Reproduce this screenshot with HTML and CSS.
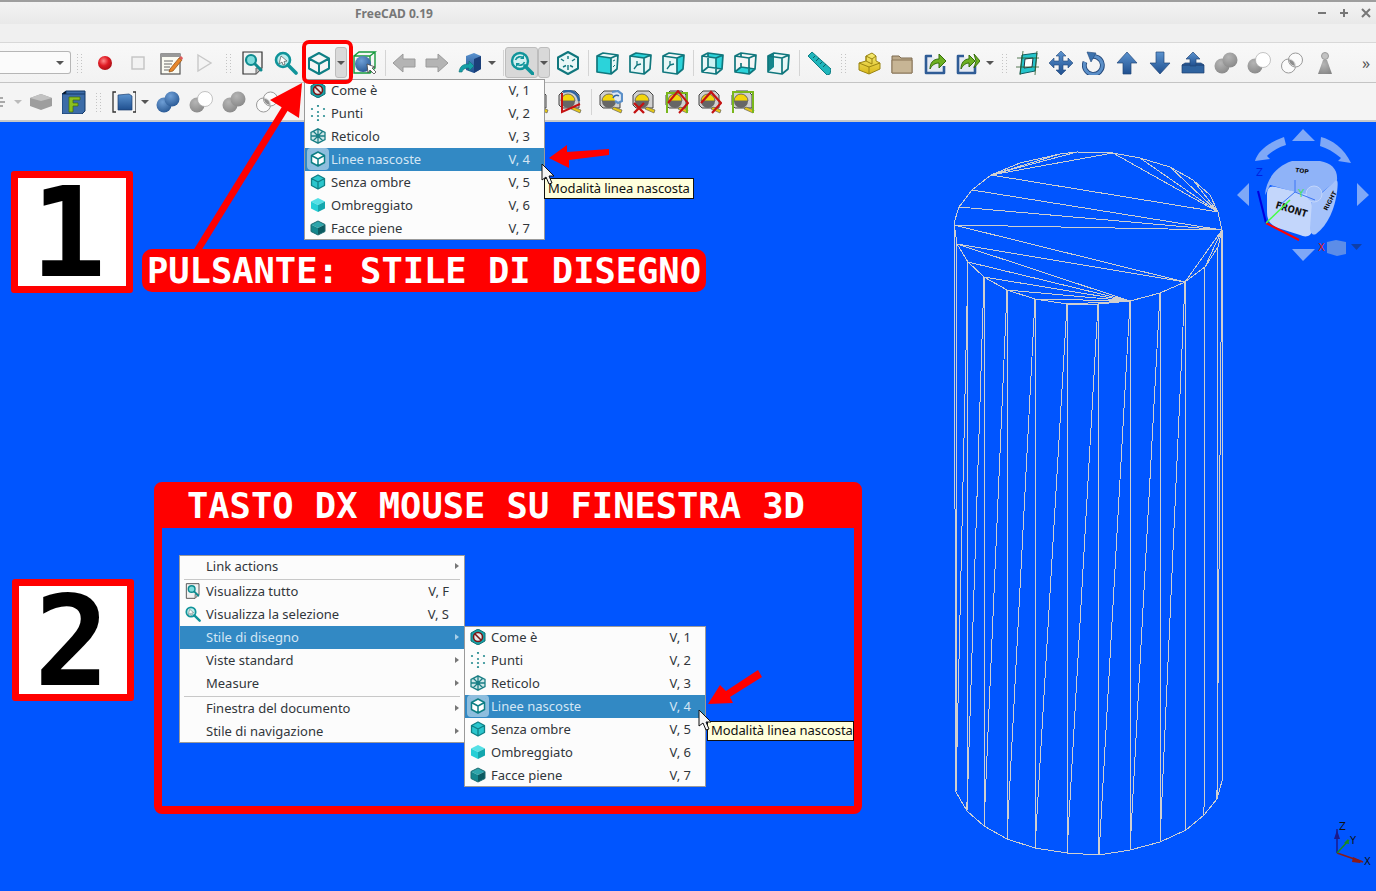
FILE: index.html
```html
<!DOCTYPE html>
<html lang="it">
<head>
<meta charset="utf-8">
<title>FreeCAD 0.19</title>
<link rel="stylesheet" href="styles.css">
</head>
<body>
<svg class="defs" width="0" height="0" aria-hidden="true">
  <defs>
    <radialGradient id="gRec" cx=".4" cy=".35" r=".7"><stop offset="0" stop-color="#ff8a8a"/><stop offset=".5" stop-color="#e01b24"/><stop offset="1" stop-color="#a40e14"/></radialGradient>
    <linearGradient id="gBlue" x1="0" y1="0" x2="0" y2="1"><stop offset="0" stop-color="#5b93cf"/><stop offset="1" stop-color="#1f4f8f"/></linearGradient>
    <radialGradient id="gBall" cx=".4" cy=".3" r=".8"><stop offset="0" stop-color="#6f9fd6"/><stop offset="1" stop-color="#23538f"/></radialGradient>
    <radialGradient id="gGray" cx=".4" cy=".3" r=".8"><stop offset="0" stop-color="#b5b5b5"/><stop offset="1" stop-color="#858585"/></radialGradient>
    <linearGradient id="gYel" x1="0" y1="0" x2="0" y2="1"><stop offset="0" stop-color="#f6ec74"/><stop offset="1" stop-color="#d9b718"/></linearGradient>

    <symbol id="rec" viewBox="0 0 24 24"><circle cx="12" cy="12" r="7" fill="url(#gRec)"/></symbol>
    <symbol id="stop" viewBox="0 0 24 24"><rect x="6" y="6" width="12" height="12" fill="#f2f2f2" stroke="#c4c4c4" stroke-width="1.4"/></symbol>
    <symbol id="macro" viewBox="0 0 24 24"><rect x="2" y="3" width="19" height="20" fill="#fbfbf2" stroke="#555" stroke-width="1.2"/><path d="M2 3h19v3H2z" fill="#999"/><path d="M5 10h9M5 13h8M5 16h6M5 19h9" stroke="#666"/><path d="M11 18l9-11 3 2-9 11-4 1z" fill="#e8872a" stroke="#8a4a12" stroke-width=".7"/><path d="M20 7l2-2 2 2-1 2z" fill="#e05a5a"/></symbol>
    <symbol id="play" viewBox="0 0 24 24"><path d="M6 4l13 8-13 8z" fill="#f4f4f4" stroke="#c8c8c8" stroke-width="1.4"/></symbol>
    <symbol id="fitall" viewBox="0 0 24 24"><path d="M2 1h19v16l-6 6H2z" fill="#f2f2f2" stroke="#333" stroke-width="1.2"/><path d="M21 17h-6v6z" fill="#bbb" stroke="#666"/><circle cx="10" cy="9" r="5" fill="#7fdcdc" stroke="#0e8b8f" stroke-width="2.2"/><path d="M14 13l6 6" stroke="#0e8b8f" stroke-width="3" stroke-linecap="round"/></symbol>
    <symbol id="fitsel" viewBox="0 0 24 24"><circle cx="9" cy="9" r="7" fill="#bfeeee" stroke="#10949a" stroke-width="2.6"/><path d="M14 14l8 8" stroke="#10949a" stroke-width="3.6" stroke-linecap="round"/><path d="M5 13l2-8 6 5-3 .5 1 3-2 .5-1-3z" fill="#fff" stroke="#555" stroke-width=".7"/></symbol>
    <symbol id="wire" viewBox="0 0 24 24"><path d="M12 2l10 5.500v10L12 23 2 17.500v-10zM2 7.500l10 5.500 10-5.500M12 13v10" fill="none" stroke="#0e7f85" stroke-width="2" stroke-linejoin="round"/></symbol>
    <symbol id="bound" viewBox="0 0 24 24"><path d="M1 5h16v17H1zM1 5l5-4h16l-5 4M22 1v16l-5 5" fill="none" stroke="#169a3c" stroke-width="1.4"/><circle cx="10" cy="13" r="8" fill="url(#gBall)"/><path d="M14 13l1 9 2-3 4 4 2-2-4-4 3-1z" fill="#fff" stroke="#444" stroke-width=".8"/></symbol>
    <symbol id="back" viewBox="0 0 24 24"><path d="M1 12l10-9v5h12v8H11v5z" fill="#b4b4b4" stroke="#9a9a9a"/></symbol>
    <symbol id="fwd" viewBox="0 0 24 24"><path d="M23 12L13 3v5H1v8h12v5z" fill="#b4b4b4" stroke="#9a9a9a"/></symbol>
    <symbol id="nav" viewBox="0 0 24 24"><path d="M8 5l8-3 7 3v13l-7 4-8-3z" fill="url(#gBlue)"/><path d="M16 8l7-3v13l-7 4z" fill="#1b3f79"/><path d="M1 21c1-6 4-8 10-8v-3l5 5-5 5v-3c-4 0-6 1-7 4z" fill="#15a0a8" stroke="#0d6e74" stroke-width=".6"/></symbol>
    <symbol id="sync" viewBox="0 0 24 24"><circle cx="10" cy="10" r="8" fill="#d2f0f0" stroke="#10949a" stroke-width="2.4"/><path d="M15 15l8 8" stroke="#10949a" stroke-width="3.6" stroke-linecap="round"/><path d="M5.500 9a5 5 0 0 1 8-2M14.500 11a5 5 0 0 1-8 2" fill="none" stroke="#10949a" stroke-width="1.6"/><path d="M14 4v4h-4zM6 16v-4h4z" fill="#10949a"/></symbol>
    <symbol id="iso" viewBox="0 0 24 24"><path d="M12 1l10 5.500v11L12 23 2 17.500v-11z" fill="#e9f7f7" stroke="#10777d" stroke-width="2" stroke-linejoin="round"/><path d="M5 8l3 2M19 8l-3 2M12 14v5M12 5v3M7 16l3-1.500M17 16l-3-1.500" stroke="#10777d" stroke-width="1.4"/></symbol>

    <symbol id="vFront" viewBox="0 0 24 24"><path d="M2 5l14 2v16L2 21z" fill="#2bd3da"/><path d="M2 5l6-3 15 2-7 3zM16 7l7-3-1 14-6 5z" fill="#e8f7f7"/><path d="M18 10l2-1M18 16l2-2" stroke="#10777d"/><path d="M2 5l6-3 15 2-1 14-6 5-14-2zM2 5l14 2v16M16 7l7-3" fill="none" stroke="#10777d" stroke-width="1.7" stroke-linejoin="round"/></symbol>
    <symbol id="vTop" viewBox="0 0 24 24"><path d="M2 5l14 2v16L2 21z" fill="#e8f7f7"/><path d="M16 7l7-3-1 14-6 5z" fill="#e8f7f7"/><path d="M2 5l6-3 15 2-7 3z" fill="#2bd3da"/><path d="M9 14l-3 4M9 14l4-1M9 14V10" stroke="#10777d" stroke-width="1.3"/><path d="M2 5l6-3 15 2-1 14-6 5-14-2zM2 5l14 2v16M16 7l7-3" fill="none" stroke="#10777d" stroke-width="1.7" stroke-linejoin="round"/></symbol>
    <symbol id="vRight" viewBox="0 0 24 24"><path d="M2 5l14 2v16L2 21z" fill="#e8f7f7"/><path d="M16 7l7-3-1 14-6 5z" fill="#2bd3da"/><path d="M9 14l-3 4M9 14l4-1M9 14V10" stroke="#10777d" stroke-width="1.3"/><path d="M2 5l6-3 15 2-1 14-6 5-14-2zM2 5l14 2v16M16 7l7-3" fill="none" stroke="#10777d" stroke-width="1.7" stroke-linejoin="round"/></symbol>
    <symbol id="vRear" viewBox="0 0 24 24"><path d="M8 2l15 2-1 14-14-2z" fill="#2bd3da"/><path d="M2 5l14 2v16L2 21z" fill="#e8f7f7" fill-opacity=".85"/><path d="M2 5l6-3 15 2-1 14-6 5-14-2zM2 5l14 2v16M16 7l7-3M8 2v14l-6 5M8 16l14 2" fill="none" stroke="#10777d" stroke-width="1.7" stroke-linejoin="round"/></symbol>
    <symbol id="vBottom" viewBox="0 0 24 24"><path d="M2 21l6-5 14 2-6 5z" fill="#2bd3da"/><path d="M2 5l6-3 15 2-1 14-6 5-14-2zM2 5l14 2v16M16 7l7-3M8 2v5M8 16l-6 5M8 16l14 2M8 16v-4" fill="none" stroke="#10777d" stroke-width="1.7" stroke-linejoin="round"/></symbol>
    <symbol id="vLeft" viewBox="0 0 24 24"><path d="M2 5l6-3v14l-6 5z" fill="#10a0a8"/><path d="M8 2l15 2-1 14-14-2z" fill="#e8f7f7"/><path d="M2 5l14 2v16L2 21z" fill="#e8f7f7" fill-opacity=".7"/><path d="M2 5l6-3v14l-6 5z" fill="#12868c"/><path d="M2 5l6-3 15 2-1 14-6 5-14-2zM2 5l14 2v16M16 7l7-3" fill="none" stroke="#10777d" stroke-width="1.7" stroke-linejoin="round"/></symbol>

    <symbol id="ruler" viewBox="0 0 24 24"><path d="M1 5l4-4 19 17-1 5-3 1z" fill="#1fb5bb" stroke="#0e7f85"/><path d="M6 7l2-2M9 10l3-3M13 13l2-2M16 16l3-3" stroke="#0e5f65"/></symbol>
    <symbol id="part" viewBox="0 0 24 24"><path d="M2 12v7l10 4 11-5v-6l-4-2V5l-4-3-6 3v5z" fill="url(#gYel)" stroke="#9a8412"/><path d="M2 12l10 4 11-4M12 16v7M9 5l6 3 4-3M15 8v5M9 5v5l6 3" fill="none" stroke="#9a8412"/></symbol>
    <symbol id="folder" viewBox="0 0 24 24"><path d="M2 5h7l2 2h11v15H2z" fill="#bca98a" stroke="#7d6a4f"/><path d="M2 9h20v13H2z" fill="#c7b595" stroke="#8b7759"/></symbol>
    <symbol id="link" viewBox="0 0 24 24"><path d="M9 5H3v17h18v-7" fill="#e6eaf2" stroke="#2f5c96" stroke-width="2.600" stroke-linejoin="round"/><path d="M7 18c0-6 3-10 9-10V3l7 7-7 7v-5c-4 0-7 2-9 6z" fill="#6cb022" stroke="#366e0c"/></symbol>
    <symbol id="link2" viewBox="0 0 24 24"><path d="M8 5H2v17h17v-7" fill="#e6eaf2" stroke="#2f5c96" stroke-width="2.600" stroke-linejoin="round"/><path d="M5 18c0-6 3-10 8-10V4l6 6-6 6v-4c-3 0-6 2-8 6z" fill="#6cb022" stroke="#366e0c"/><path d="M18 3l6 7-6 7 2-7z" fill="#6cb022" stroke="#366e0c"/></symbol>
    <symbol id="plane" viewBox="0 0 24 24"><path d="M6 4l15-2-2 18-15 3z" fill="#25c4cb" stroke="#0e5f65"/><path d="M9 8l8-1-1 9-8 1z" fill="#fff" stroke="#234"/><path d="M1 7h22M0 16h23M7 0L4 24M21 0l-2 24" stroke="#2d5a2d" stroke-width=".8"/></symbol>
    <symbol id="move" viewBox="0 0 24 24"><path d="M12 0l5 5h-3v5h5V7l5 5-5 5v-3h-5v5h3l-5 5-5-5h3v-5H5v3l-5-5 5-5v3h5V5H7z" fill="url(#gBlue)" stroke="#24487a" stroke-width=".6"/></symbol>
    <symbol id="rotate" viewBox="0 0 24 24"><path d="M8 6a9 9 0 1 1-5 5" fill="none" stroke="#24487a" stroke-width="4.800"/><path d="M8 6a9 9 0 1 1-5 5" fill="none" stroke="#5b8fc8" stroke-width="3"/><path d="M5 1l9 1-5 9z" fill="#3d72ad" stroke="#24487a" stroke-width=".6"/></symbol>
    <symbol id="up" viewBox="0 0 24 24"><path d="M12 1l10 11h-6v11H8V12H2z" fill="url(#gBlue)" stroke="#24487a" stroke-width=".7"/></symbol>
    <symbol id="down" viewBox="0 0 24 24"><path d="M12 23L2 12h6V1h8v11h6z" fill="url(#gBlue)" stroke="#24487a" stroke-width=".7"/></symbol>
    <symbol id="upload" viewBox="0 0 24 24"><path d="M1 14l3-2h16l3 2v8H1z" fill="#2f639f" stroke="#1d3f70" stroke-width=".7"/><path d="M1 14h22" stroke="#1d3f70"/><path d="M12 1l7 7h-4v7H9V8H5z" fill="url(#gBlue)" stroke="#24487a" stroke-width=".7"/></symbol>

    <symbol id="bUnion" viewBox="0 0 24 24"><circle cx="8" cy="15" r="7.500" fill="url(#gGray)"/><circle cx="16" cy="9" r="7.500" fill="url(#gGray)"/></symbol>
    <symbol id="bCut" viewBox="0 0 24 24"><circle cx="8" cy="15" r="7.500" fill="url(#gGray)"/><circle cx="16" cy="9" r="7.500" fill="#fff" stroke="#aaa" stroke-width=".7"/></symbol>
    <symbol id="bInt" viewBox="0 0 24 24"><circle cx="8.500" cy="15" r="7" fill="#fff" fill-opacity=".6" stroke="#9a9a9a" stroke-width="1"/><circle cx="15.500" cy="9" r="7" fill="#fff" fill-opacity=".6" stroke="#9a9a9a" stroke-width="1"/><path d="M9 8.500a7 7 0 0 1 6 6.500 7 7 0 0 1-6-6.500z" fill="#8f8f8f"/></symbol>
    <symbol id="chess" viewBox="0 0 24 24"><circle cx="12" cy="5" r="3.500" fill="#c2c2c2" stroke="#9a9a9a"/><path d="M10 9h4l5 14H5z" fill="url(#gGray)"/></symbol>
    <symbol id="bUnionB" viewBox="0 0 24 24"><circle cx="8" cy="15" r="7.500" fill="url(#gBall)"/><circle cx="16" cy="9" r="7.500" fill="url(#gBall)"/></symbol>
    <symbol id="slab" viewBox="0 0 24 24"><path d="M1 8l11-4 11 4v8l-11 4-11-4z" fill="#9e9e9e"/><path d="M1 8l11-4 11 4-11 3z" fill="#c2c2c2"/></symbol>
    <symbol id="fcube" viewBox="0 0 24 24"><path d="M0 4l4-3h19v20l-3 3H0z" fill="#3c6ca8" stroke="#133866"/><path d="M4 1v3H0M4 4h19" stroke="#133866"/><path d="M7 7h11v3h-7v3h5v3h-5v6H7z" fill="#8cc11f" stroke="#3f6c06" stroke-width=".7"/></symbol>
    <symbol id="stack" viewBox="0 0 24 24"><path d="M0 8h14M0 12h16M0 16h14" stroke="#a9a9a9" stroke-width="2"/></symbol>
    <symbol id="bcube" viewBox="0 0 24 24"><path d="M6 5l11-1 3 2v14H6z" fill="url(#gBlue)" stroke="#1d3f70" stroke-width=".7"/><path d="M4 2H1v20h3M21 2h3v20h-3" fill="none" stroke="#333" stroke-width="1.300"/></symbol>

    <symbol id="tape" viewBox="0 0 24 24"><path d="M1 5l4-4h12l4 4v13H4l-3-3z" fill="#d0d0d0" stroke="#444" stroke-width="1"/><path d="M3 11a7 7 0 0 1 14 0z" fill="#f2d40d" stroke="#555" stroke-width=".8"/><path d="M3 11a7 7 0 0 0 14 0z" fill="#666"/><path d="M15 17l8 3-1 3-9-4z" fill="#e3c617" stroke="#555" stroke-width=".6"/></symbol>
    <symbol id="tRefresh" viewBox="0 0 24 24"><use href="#tape"/><path d="M13 2l6-1 4 3v7l-4 2-3-2" fill="#dfe8f3" stroke="#5b8fc8" stroke-width="2.200"/><path d="M14 8a4 4 0 0 1 6-2" fill="none" stroke="#2f639f" stroke-width="1.500"/></symbol>
    <symbol id="tX" viewBox="0 0 24 24"><use href="#tape"/><path d="M2 13l10 10M12 13L2 23" stroke="#c41212" stroke-width="2.400"/></symbol>
    <symbol id="tSq" viewBox="0 0 24 24"><use href="#tape"/><path d="M2 23V2h20v21" fill="none" stroke="#79b71d" stroke-width="2"/></symbol>
    <symbol id="tDia" viewBox="0 0 24 24"><use href="#tape"/><path d="M3 13L13 2l10 11-9 10" fill="none" stroke="#c41212" stroke-width="2.200"/></symbol>
    <symbol id="tSqDia" viewBox="0 0 24 24"><use href="#tape"/><path d="M2 23V3h20v20" fill="none" stroke="#79b71d" stroke-width="2"/><path d="M3 13L13 1l10 12-9 10" fill="none" stroke="#c41212" stroke-width="2"/></symbol>
    <symbol id="tArc" viewBox="0 0 24 24"><use href="#tape"/><path d="M4 3v19l18-8" fill="none" stroke="#c41212" stroke-width="2"/><path d="M5 2c8-3 15 1 16 9" fill="none" stroke="#2f639f" stroke-width="2.400"/></symbol>

    <symbol id="mCome" viewBox="0 0 16 16"><path d="M8 0l7 4v8l-7 4-7-4V4z" fill="#17a2a8" stroke="#0e6f74"/><circle cx="8" cy="8" r="4.500" fill="#e8e8e8" stroke="#7a1616" stroke-width="1.600"/><path d="M5 5l6 6" stroke="#7a1616" stroke-width="1.600"/></symbol>
    <symbol id="mPunti" viewBox="0 0 16 16"><g fill="#2a8d92"><circle cx="8" cy="1" r="1.100"/><circle cx="2" cy="4" r="1.100"/><circle cx="14" cy="4" r="1.100"/><circle cx="8" cy="7" r="1.100"/><circle cx="2" cy="11" r="1.100"/><circle cx="14" cy="11" r="1.100"/><circle cx="8" cy="15" r="1.100"/><circle cx="8" cy="11" r="1.100"/></g></symbol>
    <symbol id="mRet" viewBox="0 0 16 16"><path d="M8 .8l7 3.600v7.200l-7 3.600-7-3.600V4.400zM1 8h14M8 1v14M3 3l10 10M13 3L3 13" fill="#cfe7e8" stroke="#1a7f85" stroke-width="1.300"/></symbol>
    <symbol id="mWire" viewBox="0 0 16 16"><path d="M8 1l6.500 3.500v7L8 15l-6.500-3.500v-7z" fill="#fff"/><path d="M8 1l6.500 3.500v7L8 15l-6.500-3.500v-7zM1.500 4.500L8 8l6.500-3.500M8 8v7" fill="none" stroke="#0e7f85" stroke-width="1.500" stroke-linejoin="round"/></symbol>
    <symbol id="mFlat" viewBox="0 0 16 16"><path d="M8 1l6.500 3.500v7L8 15l-6.500-3.500v-7z" fill="#2bc6cd"/><path d="M8 1l6.500 3.500v7L8 15l-6.500-3.500v-7zM1.500 4.500L8 8l6.500-3.500M8 8v7" fill="none" stroke="#0e7f85" stroke-width="1.300" stroke-linejoin="round"/></symbol>
    <symbol id="mShade" viewBox="0 0 16 16"><path d="M1 4.500L8 1l7 3.500L8 8z" fill="#55e0e6"/><path d="M1 4.500L8 8v7l-7-3.500z" fill="#27cfd6"/><path d="M15 4.500L8 8v7l7-3.500z" fill="#14a6ad"/></symbol>
    <symbol id="mFull" viewBox="0 0 16 16"><path d="M1 4.500L8 1l7 3.500L8 8z" fill="#2ea5ab"/><path d="M1 4.500L8 8v7l-7-3.500z" fill="#14878d"/><path d="M15 4.500L8 8v7l7-3.500z" fill="#0b5a60"/><path d="M8 1l7 3.500v7L8 15l-7-3.500v-7z" fill="none" stroke="#1e6b70"/></symbol>
    <symbol id="cursor" viewBox="0 0 14 22"><path d="M1 1v16l4-3 3 7 3-1-3-7h5z" fill="#f4f4f4" stroke="#111" stroke-width="1"/></symbol>
  </defs>
</svg>

<header class="titlebar">
  <span class="title">FreeCAD 0.19</span>
  <span class="winbtns">
    <svg class="winbtn" viewBox="0 0 10 10"><path d="M1 5h8"/></svg>
    <svg class="winbtn" viewBox="0 0 10 10"><path d="M1 5h8M5 1v8"/></svg>
    <svg class="winbtn" viewBox="0 0 10 10"><path d="M1 1l8 8M9 1L1 9"/></svg>
  </span>
</header>
<div class="menubar"></div>

<div class="toolbar tb1">
  <div class="combo"><i class="caret"></i></div>
  <i class="handle h17"></i>
  <span class="btn"><svg class="ic"><use href="#rec"/></svg></span>
  <span class="btn"><svg class="ic"><use href="#stop"/></svg></span>
  <span class="btn"><svg class="ic"><use href="#macro"/></svg></span>
  <span class="btn"><svg class="ic"><use href="#play"/></svg></span>
  <i class="handle h16"></i>
  <span class="btn"><svg class="ic"><use href="#fitall"/></svg></span>
  <span class="btn"><svg class="ic"><use href="#fitsel"/></svg></span>
  <span class="btn"><svg class="ic"><use href="#wire"/></svg></span>
  <span class="dropbtn boxed"><i class="caret"></i></span>
  <span class="btn"><svg class="ic"><use href="#bound"/></svg></span>
  <i class="sep s6"></i>
  <span class="btn"><svg class="ic"><use href="#back"/></svg></span>
  <span class="btn"><svg class="ic"><use href="#fwd"/></svg></span>
  <span class="btn"><svg class="ic"><use href="#nav"/></svg></span>
  <span class="dropbtn"><i class="caret"></i></span>
  <i class="sep s6"></i>
  <span class="btn active"><svg class="ic"><use href="#sync"/></svg></span>
  <span class="dropbtn boxed"><i class="caret"></i></span>
  <span class="btn"><svg class="ic"><use href="#iso"/></svg></span>
  <i class="sep s6"></i>
  <span class="btn"><svg class="ic"><use href="#vFront"/></svg></span>
  <span class="btn"><svg class="ic"><use href="#vTop"/></svg></span>
  <span class="btn"><svg class="ic"><use href="#vRight"/></svg></span>
  <i class="sep s6"></i>
  <span class="btn"><svg class="ic"><use href="#vRear"/></svg></span>
  <span class="btn"><svg class="ic"><use href="#vBottom"/></svg></span>
  <span class="btn"><svg class="ic"><use href="#vLeft"/></svg></span>
  <i class="sep s8"></i>
  <span class="btn"><svg class="ic"><use href="#ruler"/></svg></span>
  <i class="handle h17"></i>
  <span class="btn"><svg class="ic"><use href="#part"/></svg></span>
  <span class="btn"><svg class="ic"><use href="#folder"/></svg></span>
  <span class="btn"><svg class="ic"><use href="#link"/></svg></span>
  <span class="btn"><svg class="ic"><use href="#link2"/></svg></span>
  <span class="dropbtn"><i class="caret"></i></span>
  <i class="handle h14"></i>
  <span class="btn"><svg class="ic"><use href="#plane"/></svg></span>
  <span class="btn"><svg class="ic"><use href="#move"/></svg></span>
  <span class="btn"><svg class="ic"><use href="#rotate"/></svg></span>
  <span class="btn"><svg class="ic"><use href="#up"/></svg></span>
  <span class="btn"><svg class="ic"><use href="#down"/></svg></span>
  <span class="btn"><svg class="ic"><use href="#upload"/></svg></span>
  <span class="btn"><svg class="ic"><use href="#bUnion"/></svg></span>
  <span class="btn"><svg class="ic"><use href="#bCut"/></svg></span>
  <span class="btn"><svg class="ic"><use href="#bInt"/></svg></span>
  <span class="btn"><svg class="ic"><use href="#chess"/></svg></span>
  <span class="more">»</span>
</div>

<div class="toolbar tb2">
  <span class="stub"><svg class="ic"><use href="#stack"/></svg></span>
  <span class="dropbtn narrow"><i class="caret faint"></i></span>
  <span class="btn"><svg class="ic"><use href="#slab"/></svg></span>
  <span class="btn"><svg class="ic"><use href="#fcube"/></svg></span>
  <i class="handle h17"></i>
  <span class="btn"><svg class="ic"><use href="#bcube"/></svg></span>
  <span class="dropbtn narrow"><i class="caret"></i></span>
  <span class="btn"><svg class="ic"><use href="#bUnionB"/></svg></span>
  <span class="btn"><svg class="ic"><use href="#bCut"/></svg></span>
  <span class="btn"><svg class="ic"><use href="#bUnion"/></svg></span>
  <span class="btn"><svg class="ic"><use href="#bInt"/></svg></span>
  <span class="btn wide-hidden"></span>
  <span class="btn"><svg class="ic"><use href="#tape"/></svg></span>
  <span class="btn"><svg class="ic"><use href="#tArc"/></svg></span>
  <i class="sep s8"></i>
  <span class="btn"><svg class="ic"><use href="#tRefresh"/></svg></span>
  <span class="btn"><svg class="ic"><use href="#tX"/></svg></span>
  <span class="btn"><svg class="ic"><use href="#tSqDia"/></svg></span>
  <span class="btn"><svg class="ic"><use href="#tDia"/></svg></span>
  <span class="btn"><svg class="ic"><use href="#tSq"/></svg></span>
</div>

<main class="viewport">
  <svg class="model" viewBox="0 0 1376 891" shape-rendering="crispEdges">
    <g class="wires">
      <path d="M954 223L959 207L972 190L991 175L1020 163L1060 154L1077 152L1113 153L1140 158L1170 167L1193 180L1210 195L1218 212L1222 230L1218 247L1205 267L1185 282L1160 293L1130 301L1098 304L1067 304L1035 299L1007 290L984 277L968 262L957 244Z"/>
      <path d="M991 175L1113 153M991 175L1077 152M991 175L1060 154M991 175L1020 163"/>
      <path d="M991 175L1218 212M972 190L1222 230M959 207L1222 230M954 225L1222 230"/>
      <path d="M954 225L1185 282M957 244L1185 282M957 244L1130 301M968 262L1130 301M984 277L1130 301M1007 290L1130 301M1035 299L1130 301M1067 304L1130 301"/>
      <path d="M1185 282L1222 230M1205 267L1222 230M1160 293L1185 282M1113 153L1218 212M1140 158L1218 212M1170 167L1218 212M1193 180L1218 212"/>
      <path d="M956 792L967 811L984 826L1007 839L1035 848L1067 853L1099 855L1130 850L1160 842L1186 830L1204 815L1217 799L1222 781"/>
      <path d="M954 223L956 792M957 244L956 792M968 262L967 811M984 277L984 826M1007 290L1007 839M1035 299L1035 848M1067 304L1067 853M1098 304L1099 855M1130 301L1130 850M1160 293L1160 842M1185 282L1186 830M1205 267L1204 815M1218 247L1217 799M1222 230L1222 781"/>
      <path d="M968 262L956 792M984 277L967 811M1007 290L984 826M1035 299L1007 839M1067 304L1035 848M1098 304L1067 853M1130 301L1099 855M1160 293L1130 850M1185 282L1160 842M1205 267L1204 815M1222 230L1217 799"/>
    </g>
  </svg>

  <svg class="navcube" viewBox="0 0 156 150">
    <g class="navshape">
      <path d="M83 9L72 21H95zM83 141L72 129H95zM17 75L29 63V86zM149 75L137 63V86z"/>
      <path d="M35 41C38 30 50 22 64 17L66 25C56 28 50 33 47 36L50 39zM101 17C112 20 124 28 131 43L118 41L121 38C114 32 107 28 100 26z"/>
    </g>
    <path class="cubeTop" d="M45 75C46 60 56 46 72 41L100 41C112 43 118 50 117 60L95 78L75 72L50 65z"/>
    <path class="cubeFront" d="M47 75C47 68 50 65 56 67L85 74C90 75 92 79 92 86V110C92 116 86 118 80 115L58 108C50 105 47 100 47 92z"/>
    <path class="cubeRight" d="M92 82L116 60C118 60 118 64 117 72C115 88 108 105 96 114C92 116 90 112 90 108z"/>
    <circle cx="94" cy="74" r="8" class="cubeDot"/>
    <path d="M75 72V60M75 72L60 85M75 72L95 80" class="cubeEdge"/>
    <text x="0" y="0" class="cubeText" transform="translate(55 88) rotate(17) scale(.85 1)">FRONT</text>
    <text x="0" y="0" class="cubeText small" transform="translate(75 52) rotate(8)">TOP</text>
    <text x="0" y="0" class="cubeText small" transform="translate(107 91) rotate(-62)">RIGHT</text>
    <path d="M46 103L38 71" class="axZ"/><path d="M46 103L79 120" class="axX"/><path d="M46 103L70 80" class="axY"/>
    <text x="36" y="56" class="axL lz">Z</text><text x="78" y="77" class="axL ly">Y</text><text x="98" y="131" class="axL lx">X</text>
    <path d="M116 120l10 2 0 12-9 2-10-3 0-11z" class="miniCube"/>
    <path d="M131 124h11l-5.500 6z" class="miniDrop"/>
  </svg>

  <svg class="axes" viewBox="0 0 50 50">
    <path d="M11 8v24" class="smZ"/><path d="M8 18h6l-3-9z" class="smZf"/>
    <path d="M11 32l26 9" class="smX"/><path d="M27 36l9 4-2 2-8-1z" class="smXf"/>
    <path d="M11 32l12-13" class="smY"/><path d="M18 22l4-4 1 5z" class="smYf"/>
    <text x="13" y="9" class="smL">Z</text><text x="24" y="23" class="smL">Y</text><text x="38" y="44" class="smL">X</text>
  </svg>

  <div class="badge b1"><span>1</span></div>
  <div class="badge b2"><span>2</span></div>
  <div class="label">PULSANTE: STILE DI DISEGNO</div>
  <div class="panel"><h2>TASTO DX MOUSE SU FINESTRA 3D</h2><div class="panelbody"></div></div>

  <ul class="menu m-top">
    <li><svg class="mi"><use href="#mCome"/></svg><span>Come è</span><kbd>V, 1</kbd></li>
    <li><svg class="mi"><use href="#mPunti"/></svg><span>Punti</span><kbd>V, 2</kbd></li>
    <li><svg class="mi"><use href="#mRet"/></svg><span>Reticolo</span><kbd>V, 3</kbd></li>
    <li class="on"><svg class="mi"><use href="#mWire"/></svg><span>Linee nascoste</span><kbd>V, 4</kbd></li>
    <li><svg class="mi"><use href="#mFlat"/></svg><span>Senza ombre</span><kbd>V, 5</kbd></li>
    <li><svg class="mi"><use href="#mShade"/></svg><span>Ombreggiato</span><kbd>V, 6</kbd></li>
    <li><svg class="mi"><use href="#mFull"/></svg><span>Facce piene</span><kbd>V, 7</kbd></li>
  </ul>

  <ul class="menu m-ctx">
    <li class="sub"><span class="noic">Link actions</span></li>
    <li class="div"></li>
    <li><svg class="mi"><use href="#fitall"/></svg><span>Visualizza tutto</span><kbd>V, F</kbd></li>
    <li><svg class="mi"><use href="#fitsel"/></svg><span>Visualizza la selezione</span><kbd>V, S</kbd></li>
    <li class="sub on"><span class="noic">Stile di disegno</span></li>
    <li class="sub"><span class="noic">Viste standard</span></li>
    <li class="sub"><span class="noic">Measure</span></li>
    <li class="div"></li>
    <li class="sub"><span class="noic">Finestra del documento</span></li>
    <li class="sub"><span class="noic">Stile di navigazione</span></li>
  </ul>

  <ul class="menu m-sub">
    <li><svg class="mi"><use href="#mCome"/></svg><span>Come è</span><kbd>V, 1</kbd></li>
    <li><svg class="mi"><use href="#mPunti"/></svg><span>Punti</span><kbd>V, 2</kbd></li>
    <li><svg class="mi"><use href="#mRet"/></svg><span>Reticolo</span><kbd>V, 3</kbd></li>
    <li class="on"><svg class="mi"><use href="#mWire"/></svg><span>Linee nascoste</span><kbd>V, 4</kbd></li>
    <li><svg class="mi"><use href="#mFlat"/></svg><span>Senza ombre</span><kbd>V, 5</kbd></li>
    <li><svg class="mi"><use href="#mShade"/></svg><span>Ombreggiato</span><kbd>V, 6</kbd></li>
    <li><svg class="mi"><use href="#mFull"/></svg><span>Facce piene</span><kbd>V, 7</kbd></li>
  </ul>

  <div class="tip t1">Modalità linea nascosta</div>
  <div class="tip t2">Modalità linea nascosta</div>
  <svg class="cur c1"><use href="#cursor"/></svg>
  <svg class="cur c2"><use href="#cursor"/></svg>
</main>

<svg class="marks" viewBox="0 0 1376 891">
  <path d="M197 251L289 102" class="redline"/>
  <path d="M302 83L270 100L299 118z" class="redfill"/>
  <path d="M549 158L567 145V152L609 149V155L569 160V168z" class="redfill"/>
  <path d="M708 704L720 685L726 691L758 670L762 677L730 697L733 703z" class="redfill"/>
  <rect x="304" y="42" width="47" height="40" rx="5" class="redbox"/>
</svg>
</body>
</html>
```
FILE: styles.css
```css
* { box-sizing: border-box; }
html, body { margin: 0; padding: 0; }
body {
  width: 1376px; height: 891px; overflow: hidden; position: relative;
  display: flex; flex-direction: column;
  font-family: "Noto Sans", "Open Sans", sans-serif; font-size: 13px; color: #31363b;
  background: #0055ff;
}
.defs { position: absolute; }

.titlebar {
  height: 24px; flex: none; display: flex; align-items: center; justify-content: flex-end;
  position: relative; border-top: 2px solid #9e9e9e;
  background: linear-gradient(#f3f3f3, #e9e9e9);
}
.title { position: absolute; left: 355px; top: 3px; font-weight: 700; font-size: 12px; line-height: 17px; color: #777; }
.winbtns { display: flex; gap: 12px; padding-right: 5px; margin-top: -1px; }
.winbtn { width: 10px; height: 10px; fill: none; stroke: #777; stroke-width: 2; }
.menubar { height: 19px; flex: none; background: #f0f0f0; border-bottom: 1px solid #d8d8d8; }

.toolbar {
  display: flex; align-items: center; flex: none; overflow: hidden; width: 1376px;
  background: #f5f5f5; border-bottom: 1px solid #c4c4c4;
}
.tb1 { height: 40px; background: linear-gradient(#f8f8f8, #f2f2f2); }
.tb2 { height: 39px; background: #f4f4f4; border-bottom: 2px solid #c8c8c8; }

.btn { width: 33px; height: 31px; flex: none; display: flex; align-items: center; justify-content: center; }
.ic { width: 24px; height: 24px; display: block; overflow: visible; }
.active { background: #d8d8d8; border: 1px solid #bdbdbd; border-radius: 3px; }
.dropbtn { width: 12px; height: 31px; flex: none; display: flex; align-items: center; justify-content: center; margin-right: 1px; }
.dropbtn.boxed { background: #d9d9d9; border: 1px solid #bdbdbd; border-radius: 3px; }
.dropbtn.narrow { width: 10px; margin-right: 1px; }
.caret { width: 0; height: 0; border-left: 4px solid transparent; border-right: 4px solid transparent; border-top: 4px solid #555; }
.caret.faint { border-top-color: #bbb; }

.handle {
  flex: none; height: 20px;
  background-image: radial-gradient(circle, #c4c4c4 0.8px, transparent 1px), radial-gradient(circle, #c4c4c4 0.8px, transparent 1px);
  background-size: 3px 3px, 3px 3px; background-repeat: repeat-y, repeat-y;
  background-position: calc(50% - 2px) 0, calc(50% + 2px) 0;
}
.h17 { width: 17px; }
.h16 { width: 16px; }
.h14 { width: 14px; }
.sep { flex: none; height: 26px; display: block; position: relative; }
.sep::after { content: ""; position: absolute; top: 0; bottom: 0; left: 60%; width: 1px; background: #d4d4d4; }
.s6 { width: 6px; }
.s8 { width: 8px; }

.combo {
  width: 71px; height: 23px; flex: none; position: relative; display: flex; align-items: center; justify-content: flex-end;
  padding-right: 6px; background: #fbfbfb; border: 1px solid #b6b6b6; border-left: 0; border-radius: 0 3px 3px 0;
}
.more { margin-left: 21px; font-size: 16px; line-height: 16px; color: #555; }
.stub { width: 13px; flex: none; overflow: hidden; display: flex; justify-content: flex-end; }
.wide-hidden { width: 237px; }

.viewport { flex: 1; position: relative; background: #0055ff; }

.model { position: absolute; left: 0; top: -122px; width: 1376px; height: 891px; }
.wires path { fill: none; stroke: #cfcfcf; stroke-width: 1; }

.navcube { position: absolute; left: 1220px; top: -2px; width: 156px; height: 150px; }
.navshape path { fill: #7fa8f7; }
.cubeTop { fill: #8fb3f8; }
.cubeFront { fill: #c3d6fb; }
.cubeRight { fill: #a5c2fa; }
.cubeDot { fill: #a5c2fa; stroke: #c3d6fb; }
.cubeEdge { stroke: #3a74f5; fill: none; }
.cubeText { font: 700 10px "DejaVu Sans", sans-serif; fill: #111; }
.cubeText.small { font-size: 6px; }
.axZ { stroke: #0000e0; stroke-width: 2; }
.axX { stroke: #ff0000; stroke-width: 2; }
.axY { stroke: #44ff44; stroke-width: 1.500; }
.axL { font: 10px "DejaVu Sans", sans-serif; }
.lz { fill: #0020e0; }
.ly { fill: #44e060; }
.lx { fill: #e02020; }
.miniCube { fill: #5c8de8; }
.miniDrop { fill: #0f3fa8; }

.axes { position: absolute; left: 1326px; top: 699px; width: 50px; height: 50px; }
.smZ { stroke: #1a1a8c; stroke-width: 1.500; }
.smZf { fill: #1a1a8c; }
.smX { stroke: #8a1a1a; stroke-width: 1.500; }
.smXf { fill: #8a1a1a; }
.smY { stroke: #1a8a1a; stroke-width: 1.500; }
.smYf { fill: #1a8a1a; }
.smL { font: 10px "DejaVu Sans", sans-serif; fill: #111; }

.badge {
  position: absolute; width: 122px; height: 122px; background: #fff; border: 7px solid #ff0000; border-radius: 3px;
  display: flex; align-items: center; justify-content: center;
  font: 700 125px/1 "DejaVu Sans Mono", monospace; color: #000;
}
.b1 { left: 11px; top: 49px; padding-right: 7px; }
.b2 { left: 12px; top: 457px; padding-right: 2px; padding-top: 2px; }

.label {
  position: absolute; left: 142px; top: 127px; width: 564px; height: 43px; background: #ff0000; border-radius: 10px;
  font: 700 35.4px/43px "DejaVu Sans Mono", monospace; color: #fff; text-align: center; white-space: nowrap;
}
.panel {
  position: absolute; left: 154px; top: 360px; width: 708px; height: 332px; border: 8px solid #ff0000; border-radius: 8px;
  display: flex; flex-direction: column; background: transparent;
}
.panel h2 {
  margin: 0; height: 38px; flex: none; background: #ff0000; color: #fff; padding-left: 25px;
  font: 700 35.4px/32px "DejaVu Sans Mono", monospace; white-space: nowrap;
}
.panelbody { flex: 1; }

.menu {
  position: absolute; margin: 0; padding: 0; list-style: none; background: #fcfcfc; border: 1px solid #9a9a9a;
}
.menu li { height: 23px; padding-bottom: 2px; display: flex; align-items: center; position: relative; color: #31363b; white-space: nowrap; }
.menu li:first-child { margin-top: -1px; }
.menu .mi { width: 16px; height: 16px; flex: none; margin: 0 5px 0 5px; }
.menu li span { flex: 1; }
.menu li span.noic { padding-left: 26px; }
.menu kbd { font: inherit; padding-right: 14px; }
.menu li.on { background: #3289c4; color: #d4e6f4; }
.menu li.on .mi { background: rgba(255,255,255,.45); outline: 3px solid rgba(255,255,255,.45); outline-offset: 0; border-radius: 1px; }
.menu li.sub::after { content: ""; width: 0; height: 0; margin-right: 5px; border-top: 3.5px solid transparent; border-bottom: 3.5px solid transparent; border-left: 4px solid #777; }
.menu li.on.sub::after { border-left-color: #a9cfe8; }
.menu li.div { height: 3px; padding: 0; margin: 0 4px; background: linear-gradient(transparent 1px, #c8c8c8 1px, #c8c8c8 2px, transparent 2px); }

.m-top { left: 304px; top: -43px; width: 241px; height: 161px; }
.m-ctx { left: 179px; top: 433px; width: 286px; height: 188px; }
.m-ctx li.div { height: 2px; }
.m-ctx kbd { padding-right: 15px; }
.m-sub { left: 464px; top: 504px; width: 242px; height: 161px; }

.tip {
  position: absolute; background: #ffffdc; border: 1px solid #111; color: #111; height: 21px; line-height: 19px; padding: 0 3px; white-space: nowrap; letter-spacing: -0.08px;
}
.t1 { left: 544px; top: 56px; width: 150px; }
.t2 { left: 707px; top: 599px; width: 147px; height: 20px; line-height: 16px; }

.cur { position: absolute; width: 14px; height: 22px; }
.c1 { left: 541px; top: 41px; }
.c2 { left: 698px; top: 587px; }

.marks { position: absolute; left: 0; top: 0; width: 1376px; height: 891px; pointer-events: none; }
.redline { stroke: #ff0000; stroke-width: 7; fill: none; }
.redfill { fill: #ff0000; }
.redbox { fill: none; stroke: #ff0000; stroke-width: 4; }
```
